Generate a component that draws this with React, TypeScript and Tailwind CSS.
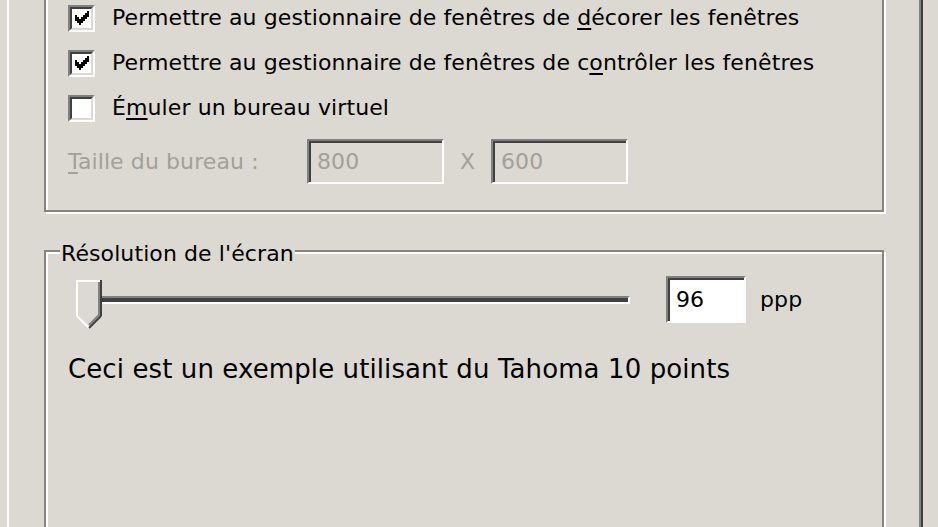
import React from 'react';

const FONT = "font-['DejaVu_Sans','Noto_Sans',sans-serif] tracking-[0.1px]";

const CHECK = ['......X', '.....XX', 'X...XXX', 'XX.XXX.', 'XXXXX..', '.XXX...', '..X....'];

function CheckMark() {
  return (
    <svg width="14" height="14" viewBox="0 0 14 14" shapeRendering="crispEdges">
      {CHECK.flatMap((row, y) =>
        row.split('').map((c, x) =>
          c === 'X' ? <rect key={`${x}-${y}`} x={x * 2} y={y * 2} width="2" height="2" fill="#000" /> : null,
        ),
      )}
    </svg>
  );
}

function Checkbox({ checked }: { checked: boolean }) {
  return (
    <span className="flex h-[27px] w-[27px] shrink-0 border-2 border-t-[#808080] border-l-[#808080] border-b-white border-r-white">
      <span className="flex h-full w-full items-center justify-center border-2 border-t-[#404040] border-l-[#404040] border-b-[#dcd9d2] border-r-[#dcd9d2] bg-white">
        {checked ? <CheckMark /> : null}
      </span>
    </span>
  );
}

function CheckRow({ checked, children }: { checked: boolean; children: React.ReactNode }) {
  return (
    <div className="flex h-[28px] items-center">
      <Checkbox checked={checked} />
      <span className="ml-[17px] whitespace-nowrap text-[22px] leading-[22px] text-black">{children}</span>
    </div>
  );
}

function Thumb() {
  return (
    <svg width="26" height="49" viewBox="0 0 26 49">
      <polygon points="0,0 26,0 26,36 13,49 0,36" fill="#dcd9d2" />
      <rect x="0" y="0" width="2" height="36" fill="#fff" />
      <rect x="0" y="0" width="24" height="2" fill="#fff" />
      <line x1="1" y1="36" x2="13" y2="48" stroke="#fff" strokeWidth="2" />
      <rect x="22" y="2" width="2" height="34" fill="#808080" />
      <line x1="23" y1="35" x2="13" y2="45" stroke="#808080" strokeWidth="2" />
      <rect x="24" y="0" width="2" height="36" fill="#404040" />
      <line x1="25" y1="36" x2="13" y2="48" stroke="#404040" strokeWidth="2" />
    </svg>
  );
}

const sunken =
  'border-2 border-t-[#808080] border-l-[#808080] border-b-white border-r-white shadow-[inset_2px_2px_0_#404040]';
const etched = 'border-2 border-[#888580] shadow-[inset_2px_2px_0_#fff,2px_2px_0_#fff]';

export default function App() {
  return (
    <div className={`flex h-[527px] w-[938px] overflow-hidden bg-[#dcd9d2] ${FONT}`}>
      <div className="w-[7px] shrink-0" />
      <div className="flex w-[916px] shrink-0 flex-col border-l-2 border-r-2 border-l-white border-r-[#404040] pl-[35px] shadow-[inset_-2px_0_0_#808080]">
        {/* affichage des fenêtres */}
        <div className={`-mt-[40px] flex w-[840px] shrink-0 flex-col gap-[17px] pb-[26px] pl-[22px] pt-[42px] ${etched}`}>
          <CheckRow checked>
            Permettre au gestionnaire de fenêtres de <u className="decoration-2 underline-offset-[3px]">d</u>écorer les fenêtres
          </CheckRow>
          <CheckRow checked>
            Permettre au gestionnaire de fenêtres de c<u className="decoration-2 underline-offset-[3px]">o</u>ntrôler les fenêtres
          </CheckRow>
          <CheckRow checked={false}>
            É<u className="decoration-2 underline-offset-[3px]">m</u>uler un bureau virtuel
          </CheckRow>
          <div className="flex h-[45px] items-center text-[22px] leading-[22px] text-[#a3a099]">
            <span className="w-[239px] whitespace-nowrap">
              <u className="decoration-2 underline-offset-[3px]">T</u>aille du bureau :
            </span>
            <div className={`flex h-[45px] w-[137px] items-center pl-[8px] ${sunken}`}>800</div>
            <span className="w-[47px] text-center">X</span>
            <div className={`flex h-[45px] w-[137px] items-center pl-[8px] ${sunken}`}>600</div>
          </div>
        </div>

        {/* résolution */}
        <div className={`relative mt-[38px] h-[400px] w-[840px] shrink-0 pt-[24px] ${etched}`}>
          <span className="absolute left-[14px] top-[-9px] bg-[#dcd9d2] px-[1px] text-[22px] leading-[22px] text-black">
            Résolution de l'écran
          </span>
          <div className="flex items-start pl-[30px]">
            <div className="relative h-[52px] w-[554px] shrink-0">
              <div className="absolute left-[4px] right-0 top-[20px] h-[8px] border-b-2 border-r-2 border-t-2 border-b-white border-r-white border-t-[#808080] bg-[#404040]" />
              <div className="absolute left-0 top-[4px]">
                <Thumb />
              </div>
            </div>
            <div className={`ml-[36px] flex h-[47px] w-[80px] shrink-0 items-center bg-white pl-[8px] text-[22px] leading-[22px] text-black ${sunken}`}>
              96
            </div>
            <span className="ml-[14px] flex h-[47px] items-center text-[22px] leading-[22px] text-black">ppp</span>
          </div>
          <p className="mt-[28px] whitespace-nowrap pl-[22px] text-[26px] leading-[26px] text-black">
            Ceci est un exemple utilisant du Tahoma 10 points
          </p>
        </div>
      </div>
    </div>
  );
}
